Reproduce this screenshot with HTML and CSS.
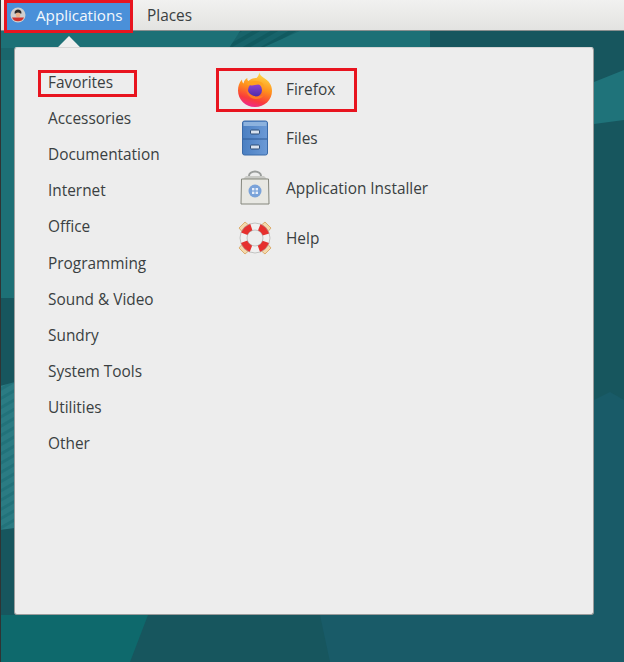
FILE: index.html
```html
<!DOCTYPE html>
<html lang="en">
<head>
  <meta charset="UTF-8">
  <title>Applications</title>
  <link rel="stylesheet" href="styles.css">
</head>
<body>
  <div class="desktop">
    <svg class="wallpaper" width="624" height="662" viewBox="0 0 624 662">
      <defs>
        <pattern id="stripes" width="8" height="8" patternUnits="userSpaceOnUse" patternTransform="rotate(-30)">
          <rect width="8" height="8" fill="#2b7b83"/>
          <rect width="8" height="3" fill="#22727a"/>
        </pattern>
        <pattern id="darkstripes" width="9" height="9" patternUnits="userSpaceOnUse" patternTransform="rotate(60)">
          <rect width="9" height="9" fill="#17636a"/>
          <rect width="4" height="9" fill="#115a60"/>
        </pattern>
      </defs>
      <rect width="624" height="662" fill="#17565e"/>
      <!-- top strip -->
      <rect x="0" y="30" width="430" height="18" fill="#1d7076"/>
      <polygon points="229,48 240,31 300,31 262,48" fill="url(#darkstripes)"/>
      <!-- left strip -->
      <rect x="0" y="30" width="15" height="268" fill="#1d7076"/>
      <rect x="0" y="48" width="15" height="12" fill="#1a666c"/>
      <polygon points="0,386 15,382 15,528 0,530" fill="url(#stripes)"/>
      <!-- right strip -->
      <polygon points="594,82 624,70 624,120 594,124" fill="#1f737a"/>
      <polygon points="594,400 610,392 624,400 624,662 594,662" fill="#195b68"/>
      <!-- bottom strip -->
      <polygon points="0,615 148,615 130,662 0,662" fill="#0e696c"/>
      <polygon points="320,615 624,615 624,662 330,662" fill="#195b68"/>
    </svg>

    <div class="topbar">
      <div class="bar-btn active marked">
        <svg class="distro" width="16" height="16" viewBox="0 0 16 16">
          <circle cx="8" cy="8" r="7.5" fill="#cfcfcf"/>
          <path d="M4.500 6.500h7c0-3-1.500-4-3.500-4s-3.500 1-3.500 4z" fill="#2e2a28"/>
          <circle cx="8" cy="8" r="2.400" fill="#e8b48c"/>
          <path d="M2 10.500h12a6.600 6.600 0 0 1-12 0z" fill="#d0312d"/>
        </svg>
        Applications
      </div>
      <div class="bar-btn">Places</div>
    </div>

    <div class="menu-wrap">
      <div class="arrow"></div>
      <div class="menu">
        <ul class="categories">
          <li class="marked">Favorites</li>
          <li>Accessories</li>
          <li>Documentation</li>
          <li>Internet</li>
          <li>Office</li>
          <li class="lower">Programming</li>
          <li>Sound &amp; Video</li>
          <li>Sundry</li>
          <li>System Tools</li>
          <li>Utilities</li>
          <li>Other</li>
        </ul>
        <ul class="apps">
          <li class="marked">
            <svg width="36" height="36" viewBox="0 0 36 36">
              <defs>
                <linearGradient id="fx" x1="0.75" y1="0" x2="0.45" y2="1">
                  <stop offset="0" stop-color="#ffe64d"/>
                  <stop offset="0.5" stop-color="#ff8f1c"/>
                  <stop offset="0.82" stop-color="#f93b3b"/>
                  <stop offset="1" stop-color="#ef2c86"/>
                </linearGradient>
                <linearGradient id="fxball" x1="0.5" y1="0" x2="0.5" y2="1">
                  <stop offset="0" stop-color="#9546d6"/>
                  <stop offset="1" stop-color="#4b2aa8"/>
                </linearGradient>
              </defs>
              <path d="M22 0c0 3 2 5 5 7 5 3 8 7 8 13 0 9-7.500 16-17 16S1 28.500 1 19.500c0-4 1-8 4-11 0 2 .5 3 1.500 4 .5-3 2-4.500 4-5.500-.5 1.500 0 2.500 1 3 2-2 5-3 8-3 2-2 3-4 2.500-7z" fill="url(#fx)"/>
              <circle cx="18" cy="19" r="7" fill="url(#fxball)"/>
              <path d="M10 13c3-3 9-4 14-2 2 1 3 3 3 5-3-3-6-3-9-2-2 .5-6 1-8-1z" fill="#ffa21e"/>
              <path d="M9.500 18c-.5 5 3.500 10 9.500 10 3 0 6-1 8-4-5 2.500-14 2.500-17.500-6z" fill="#ff7a24"/>
            </svg>
            Firefox
          </li>
          <li>
            <svg width="36" height="36" viewBox="0 0 36 36">
              <defs>
                <linearGradient id="cab" x1="0" y1="0" x2="1" y2="0">
                  <stop offset="0" stop-color="#4a7fc2"/>
                  <stop offset="1" stop-color="#6c9ad6"/>
                </linearGradient>
              </defs>
              <rect x="5.500" y="1" width="25" height="34" rx="2" fill="url(#cab)" stroke="#3a6aa8"/>
              <rect x="6.500" y="2" width="23" height="4" fill="#8cb2de"/>
              <line x1="6" y1="19" x2="30" y2="19" stroke="#2f5b96"/>
              <rect x="13.500" y="10" width="9" height="4" rx="1" fill="#d7e2ef" stroke="#2f4f78"/>
              <rect x="13.500" y="25" width="9" height="4" rx="1" fill="#d7e2ef" stroke="#2f4f78"/>
            </svg>
            Files
          </li>
          <li>
            <svg width="36" height="36" viewBox="0 0 36 36">
              <path d="M12 10V6a6 4.500 0 0 1 12 0v4" fill="none" stroke="#9a9d9b" stroke-width="2"/>
              <path d="M9 6h18l4 4H5z" fill="#c9cac6"/>
              <path d="M4.500 9h27l.5 25H4z" fill="#e8e8e3" stroke="#85877d"/>
              <circle cx="18" cy="21" r="6.500" fill="#7aa3d9"/>
              <rect x="15" y="18" width="2.400" height="2.400" fill="#e6eefa"/>
              <rect x="18.600" y="18" width="2.400" height="2.400" fill="#e6eefa"/>
              <rect x="15" y="21.600" width="2.400" height="2.400" fill="#e6eefa"/>
              <rect x="18.600" y="21.600" width="2.400" height="2.400" fill="#e6eefa"/>
            </svg>
            Application Installer
          </li>
          <li>
            <svg width="36" height="36" viewBox="0 0 36 36">
              <path d="M2 8l6-6 7 6-7 7zM34 8l-6-6-7 6 7 7zM2 28l6 6 7-6-7-7zM34 28l-6 6-7-6 7-7z" fill="#f4d9ac" stroke="#dcae70"/>
              <circle cx="18" cy="18" r="11.500" fill="none" stroke="#f0f0f0" stroke-width="7"/>
              <circle cx="18" cy="18" r="11.500" fill="none" stroke="#e6302e" stroke-width="7" stroke-dasharray="10 8.060" stroke-dashoffset="-4"/>
              <circle cx="18" cy="18" r="15" fill="none" stroke="#a5a5a2" stroke-width="0.600"/>
              <circle cx="18" cy="18" r="8" fill="none" stroke="#a5a5a2" stroke-width="0.600"/>
            </svg>
            Help
          </li>
        </ul>
      </div>
    </div>
  </div>
</body>
</html>
```

FILE: styles.css
```css
* {
  box-sizing: border-box;
}
html, body {
  margin: 0;
  padding: 0;
}
body {
  font-family: "Open Sans", "Noto Sans", sans-serif;
  font-size: 15.4px;
  color: #3a3f41;
}
.desktop {
  position: relative;
  width: 624px;
  height: 662px;
  overflow: hidden;
  background: #17565e;
  border-left: 1px solid #2f3434;
}
.wallpaper {
  position: absolute;
  left: -1px;
  top: 0;
}
.topbar {
  position: relative;
  display: flex;
  height: 31px;
  background: linear-gradient(#f1f1f0, #e3e3e1);
  border-bottom: 1px solid #8a8f8f;
}
.bar-btn {
  display: flex;
  align-items: center;
  flex: none;
  padding: 0 14px;
  height: 30px;
  white-space: nowrap;
}
.bar-btn.active {
  width: 129px;
  height: 33px;
  margin-left: 3px;
  padding: 0 0 3px 6px;
  gap: 10px;
  font-size: 15.2px;
  background: #4a90d9;
  color: #f4f8fc;
}
.distro {
  flex: none;
}
.marked {
  outline: 3px solid #e8141f;
  outline-offset: -3px;
}
.menu-wrap {
  position: relative;
  margin: 16px 0 0 13px;
  width: 580px;
}
.arrow {
  position: absolute;
  left: 44px;
  top: -11px;
  width: 22px;
  height: 22px;
  background: #eeeeee;
  transform: rotate(45deg) scale(0.7);
}
.menu {
  position: relative;
  display: flex;
  height: 568px;
  background: #ededed;
  border-radius: 3px;
  border: 1px solid #9a9c9c;
  border-top-color: #d5d5d5;
}
.categories, .apps {
  list-style: none;
  margin: 0;
  padding: 0;
}
.categories {
  width: 201px;
  padding: 16px 0 0 23px;
}
.categories li {
  display: flex;
  align-items: center;
  height: 36px;
  padding-left: 10px;
}
.categories li.marked {
  width: 99px;
  height: 27px;
  margin: 6px 0 3px;
  padding-bottom: 3px;
}
.categories li.lower {
  margin-top: 1px;
}
.apps {
  padding-top: 20px;
}
.apps li {
  display: flex;
  align-items: center;
  gap: 13px;
  height: 50px;
  padding-left: 21px;
}
.apps li.marked {
  width: 141px;
  height: 44px;
  margin-bottom: 1px;
  padding-bottom: 2px;
}
.apps svg {
  flex: none;
}
```
